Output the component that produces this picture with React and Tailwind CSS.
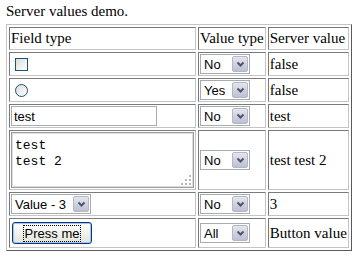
import React from 'react';

const Chevron = () => (
  <svg width="9" height="7" viewBox="0 0 9 7">
    <path d="M1.5 1.5 L4.5 4.5 L7.5 1.5" stroke="#4b5470" strokeWidth="2" fill="none" />
  </svg>
);

const Select = ({ value, width }) => (
  <div className={`flex items-center h-[20px] border border-[#a5acb2] bg-white ${width}`}>
    <span className="flex-1 pl-[3px] text-[13px] leading-none text-black whitespace-nowrap font-['Liberation_Sans',Arial,sans-serif]">
      {value}
    </span>
    <span className="mr-px w-[16px] h-[16px] flex items-center justify-center rounded-[2px] border border-[#b3b7c8] bg-gradient-to-b from-[#e4e5ee] to-[#bdc0d0]">
      <Chevron />
    </span>
  </div>
);

const Cell = ({ children, className = '' }) => (
  <td
    className={`border border-t-[#7a7a7a] border-l-[#7a7a7a] border-b-[#c4c4c4] border-r-[#c4c4c4] p-px align-middle whitespace-nowrap ${className}`}
  >
    {children}
  </td>
);

const rows = [
  {
    field: (
      <span className="ml-[4px] block w-[13px] h-[13px] border border-[#1c5180] bg-gradient-to-br from-[#dcdcd7] to-white" />
    ),
    select: <Select value="No" width="w-[50px]" />,
    server: 'false',
  },
  {
    field: (
      <span className="ml-[4px] block w-[13px] h-[13px] rounded-full border border-[#1c5180] bg-gradient-to-br from-[#dcdcd7] to-white" />
    ),
    select: <Select value="Yes" width="w-[50px]" />,
    server: 'false',
  },
  {
    field: (
      <div className="flex items-center w-[146px] h-[20px] border border-[#a5acb2] bg-white pl-[2px] text-[13px] leading-none font-['Liberation_Sans',Arial,sans-serif]">
        test
      </div>
    ),
    select: <Select value="No" width="w-[50px]" />,
    server: 'test',
  },
  {
    field: (
      <div className="relative w-[183px] h-[56px] border border-[#9c9c9c] shadow-[inset_0_0_0_1px_#dedede] bg-white pl-[3px] pt-[5px] text-[13px] leading-[16px] font-['Liberation_Mono',monospace] whitespace-pre">
        {'test\ntest 2'}
        <svg className="absolute right-[2px] bottom-[2px]" width="10" height="10" viewBox="0 0 10 10">
          <g fill="#b8b8b8">
            <rect x="8" y="0" width="2" height="2" />
            <rect x="4" y="4" width="2" height="2" />
            <rect x="8" y="4" width="2" height="2" />
            <rect x="0" y="8" width="2" height="2" />
            <rect x="4" y="8" width="2" height="2" />
            <rect x="8" y="8" width="2" height="2" />
          </g>
        </svg>
      </div>
    ),
    select: <Select value="No" width="w-[50px]" />,
    server: 'test test 2',
  },
  {
    field: <Select value="Value - 3" width="w-[80px]" />,
    select: <Select value="No" width="w-[50px]" />,
    server: '3',
  },
  {
    field: (
      <div className="py-[2px]">
        <div className="ml-px flex items-center justify-center w-[80px] h-[22px] rounded-[3px] border border-[#003c74] bg-gradient-to-b from-white to-[#e3e3dc] shadow-[inset_0_0_0_1px_#a8c3f0] text-[13px] font-['Liberation_Sans',Arial,sans-serif]">
          <span className="border border-dotted border-black px-px leading-[15px]">Press me</span>
        </div>
      </div>
    ),
    select: <Select value="All" width="w-[50px]" />,
    server: 'Button value',
  },
];

export default function App() {
  return (
    <div className="pl-[6px] pt-[3px] font-['Liberation_Serif','Times_New_Roman',serif] text-[15px] leading-[normal] text-black bg-white">
      <div>Server values demo.</div>
      <table className="mt-[4px] leading-[19px] border-separate border-spacing-[2px] border border-t-[#c4c4c4] border-l-[#c4c4c4] border-b-[#5a5a5a] border-r-[#5a5a5a]">
        <thead>
          <tr>
            <Cell className="text-left font-normal">Field type</Cell>
            <Cell className="text-left font-normal">Value type</Cell>
            <Cell className="text-left font-normal">Server value</Cell>
          </tr>
        </thead>
        <tbody>
          {rows.map((row, i) => (
            <tr key={i}>
              <Cell>{row.field}</Cell>
              <Cell>{row.select}</Cell>
              <Cell>{row.server}</Cell>
            </tr>
          ))}
        </tbody>
      </table>
    </div>
  );
}
